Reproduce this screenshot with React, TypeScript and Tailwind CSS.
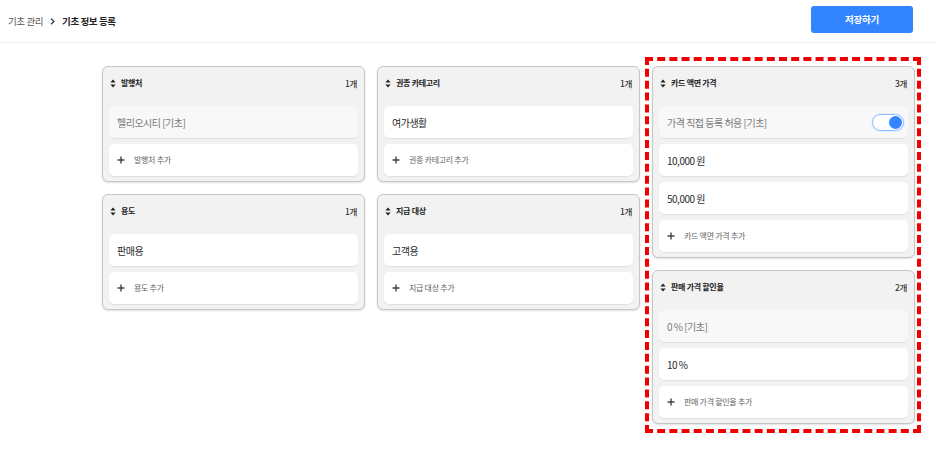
import { Fragment } from 'react';

type Item = { label: string; base?: boolean; toggle?: boolean };

interface Group {
  title: string;
  addLabel: string;
  items: Item[];
}

const FONT = "font-['Noto_Sans_CJK_KR','Noto_Sans',sans-serif]";

function SortIcon() {
  return (
    <svg width="6" height="9" viewBox="0 0 6 9" className="shrink-0">
      <path d="M3 0.5 L5.6 3.6 L0.4 3.6 Z" fill="#222" />
      <path d="M3 8.5 L5.6 5.4 L0.4 5.4 Z" fill="#222" />
    </svg>
  );
}

function PlusIcon() {
  return (
    <svg width="8" height="8" viewBox="0 0 8 8" className="shrink-0">
      <path d="M4 0.5 V7.5 M0.5 4 H7.5" stroke="#444" strokeWidth="1.4" />
    </svg>
  );
}

function Toggle() {
  return (
    <div className="flex h-[17px] w-[32px] items-center justify-end rounded-full border border-[#8fbaff] bg-white px-[1.5px] shadow-[0_0_0_1px_#e3eeff]">
      <div className="h-[13px] w-[13px] rounded-full bg-[#3385ff]" />
    </div>
  );
}

function Card({ group }: { group: Group }) {
  return (
    <div className="rounded-[6px] border border-[#c6c6c6] bg-[#f2f2f2] shadow-[0_1px_2px_rgba(0,0,0,0.12)]">
      <div className="flex h-8 items-center gap-[5px] px-[7px]">
        <SortIcon />
        <span className="flex-1 text-[8px] font-bold tracking-[-0.3px] text-[#222]">{group.title}</span>
        <span className="text-[8.5px] font-medium tracking-[-0.3px] text-[#333]">{group.items.length}개</span>
      </div>
      <div className="flex flex-col gap-1.5 px-1.5 pb-[5px] pt-[7px]">
        {group.items.map((it) => (
          <div
            key={it.label}
            className={
              it.base
                ? 'flex h-8 items-center justify-between rounded-[5px] bg-[#f8f8f8] pl-2 pr-1 shadow-[0_1px_1px_rgba(0,0,0,0.08)]'
                : 'flex h-8 items-center justify-between rounded-[5px] bg-white pl-2 pr-1 shadow-[0_1px_1px_rgba(0,0,0,0.08)]'
            }
          >
            <span
              className={
                it.base
                  ? 'text-[10px] tracking-[-0.5px] text-[#7a7a7a]'
                  : 'text-[10px] tracking-[-0.5px] text-[#2b2b2b]'
              }
            >
              {it.label}
            </span>
            {it.toggle && <Toggle />}
          </div>
        ))}
        <div className="flex h-8 items-center gap-[9px] rounded-[5px] bg-white pl-2 shadow-[0_1px_1px_rgba(0,0,0,0.08)]">
          <PlusIcon />
          <span className="text-[8px] tracking-[-0.3px] text-[#666]">{group.addLabel}</span>
        </div>
      </div>
    </div>
  );
}

const columns: Group[][] = [
  [
    { title: '발행처', addLabel: '발행처 추가', items: [{ label: '헬리오시티 [기초]', base: true }] },
    { title: '용도', addLabel: '용도 추가', items: [{ label: '판매용' }] },
  ],
  [
    { title: '권종 카테고리', addLabel: '권종 카테고리 추가', items: [{ label: '여가생활' }] },
    { title: '지급 대상', addLabel: '지급 대상 추가', items: [{ label: '고객용' }] },
  ],
  [
    {
      title: '카드 액면 가격',
      addLabel: '카드 액면 가격 추가',
      items: [
        { label: '가격 직접 등록 허용 [기초]', base: true, toggle: true },
        { label: '10,000 원' },
        { label: '50,000 원' },
      ],
    },
    {
      title: '판매 가격 할인율',
      addLabel: '판매 가격 할인율 추가',
      items: [{ label: '0 % [기초]', base: true }, { label: '10 %' }],
    },
  ],
];

export default function App() {
  return (
    <div className={`${FONT} h-[452px] w-[936px] overflow-hidden bg-white`}>
      {/* Top bar */}
      <header className="flex h-[43px] items-start justify-between border-b border-[#eeeeee]">
        <nav className="flex h-full items-center gap-[7px] pl-2 text-[9.5px] tracking-[-0.4px]">
          <span className="text-[#555]">기초 관리</span>
          <svg width="5" height="7" viewBox="0 0 5 7">
            <path d="M1 0.8 L4 3.5 L1 6.2" stroke="#333" strokeWidth="1.2" fill="none" />
          </svg>
          <span className="font-semibold text-[#222]">기초 정보 등록</span>
        </nav>
        <button className="mr-[23px] mt-[6px] h-[27px] w-[102px] rounded-[3px] bg-[#3385ff] text-[9.5px] font-semibold tracking-[-0.3px] text-white">
          저장하기
        </button>
      </header>

      {/* Groups */}
      <main className="flex justify-end gap-3 pr-[21px] pt-[23px]">
        {columns.map((col, i) => (
          <div key={i} className="relative flex w-[263px] flex-col gap-3">
            {col.map((g) => (
              <Fragment key={g.title}>
                <Card group={g} />
              </Fragment>
            ))}
            {i === 2 && (
              <div className="pointer-events-none absolute -bottom-[9px] -left-[7px] -right-[6px] -top-[9px] border-4 border-dashed border-[#f00000]" />
            )}
          </div>
        ))}
      </main>
    </div>
  );
}
